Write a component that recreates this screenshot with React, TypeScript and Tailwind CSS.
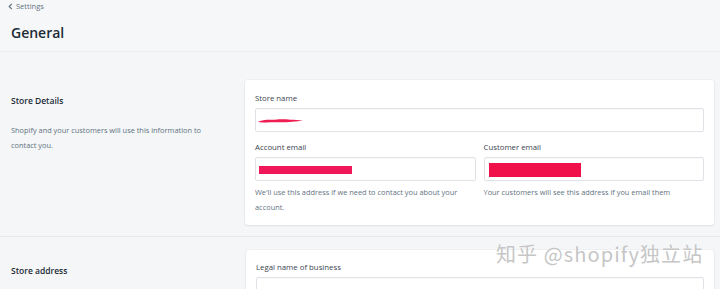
import React from "react";

const font = { fontFamily: '"Open Sans", "Noto Sans", "Noto Sans CJK SC", sans-serif' };

function Input({ children }: { children?: React.ReactNode }) {
  return (
    <div className="relative h-[24px] rounded-[2px] border border-[#dfe3e8] bg-white shadow-[inset_0_1px_0_rgba(0,0,0,0.02)]">
      {children}
    </div>
  );
}

export default function App() {
  return (
    <div className="relative h-[289px] w-[720px] overflow-hidden bg-[#f4f6f8] text-[#212b36]" style={font}>
      <div className="h-[52px] border-b border-[#eef0f2] bg-[#f6f7f9] px-[8px]">
        <div className="flex h-[13px] items-center gap-[3px] text-[7.5px] text-[#637381]">
          <svg width="5" height="7" viewBox="0 0 5 7" fill="none">
            <path d="M3.8 0.8 L1.2 3.5 L3.8 6.2" stroke="#637381" strokeWidth="1.2" />
          </svg>
          <span>Settings</span>
        </div>
        <div className="mt-[11px] pl-[3px] text-[14px] font-semibold leading-[18px] text-[#212b36]">General</div>
      </div>

      <div className="flex pl-[11px] pr-[6px] pt-[28px] pb-[11px]">
        <div className="w-[234px] shrink-0 pt-[15px]">
          <div className="text-[8.5px] font-semibold leading-[12px]">Store Details</div>
          <div className="mt-[16px] w-[200px] text-[7.4px] leading-[15px] text-[#637381]">
            Shopify and your customers will use this information to contact you.
          </div>
        </div>
        <div className="h-[145px] flex-1 rounded-[3px] bg-white px-[10px] pt-[12px] shadow-[0_0_0_1px_rgba(63,63,68,0.03),0_1px_2px_rgba(63,63,68,0.08)]">
          <div className="text-[7.8px] leading-[12px] text-[#3a4450]">Store name</div>
          <div className="mt-[4px]">
            <Input>
              <svg className="absolute left-[1px] top-[8px]" width="48" height="8" viewBox="0 0 48 8">
                <path d="M1 5 C6 2 14 3 20 2.5 C28 2 34 3 46 3.5 C38 5 28 5.5 18 5.2 C10 5 5 6 1 5 Z" fill="#ee1d52" />
              </svg>
            </Input>
          </div>
          <div className="mt-[9px] grid grid-cols-2 gap-[8px]">
            <div>
              <div className="text-[7.8px] leading-[12px] text-[#3a4450]">Account email</div>
              <div className="mt-[4px]">
                <Input>
                  <div className="absolute left-[3px] top-[8px] h-[8px] w-[93px] bg-[#f0185a]" />
                </Input>
              </div>
              <div className="mt-[4px] text-[7.4px] leading-[15px] text-[#637381]">
                We'll use this address if we need to contact you about your account.
              </div>
            </div>
            <div>
              <div className="text-[7.8px] leading-[12px] text-[#3a4450]">Customer email</div>
              <div className="mt-[4px]">
                <Input>
                  <div className="absolute left-[4px] top-[5px] h-[14px] w-[92px] bg-[#f0104a]" />
                </Input>
              </div>
              <div className="mt-[4px] text-[7.4px] leading-[15px] text-[#637381]">
                Your customers will see this address if you email them
              </div>
            </div>
          </div>
        </div>
      </div>

      <div className="flex border-t border-[#e8eaed] pl-[11px] pr-[6px] pt-[13px]">
        <div className="w-[235px] shrink-0 pt-[15px]">
          <div className="text-[8.5px] font-semibold leading-[12px]">Store address</div>
        </div>
        <div className="h-[60px] flex-1 rounded-[3px] bg-white px-[10px] pt-[11px] shadow-[0_0_0_1px_rgba(63,63,68,0.03),0_1px_2px_rgba(63,63,68,0.08)]">
          <div className="text-[7.8px] leading-[12px] text-[#3a4450]">Legal name of business</div>
          <div className="mt-[4px]">
            <Input />
          </div>
        </div>
      </div>

      <div
        className="absolute left-[496px] top-[242px] text-[20px] leading-[24px] tracking-[1.1px] text-[#c6c6c6] [text-shadow:0_0_2px_rgba(255,255,255,0.9)]"
        style={{ fontFamily: '"Noto Sans CJK SC", "Noto Sans", sans-serif' }}
      >
        知乎 @shopify独立站
      </div>
    </div>
  );
}
